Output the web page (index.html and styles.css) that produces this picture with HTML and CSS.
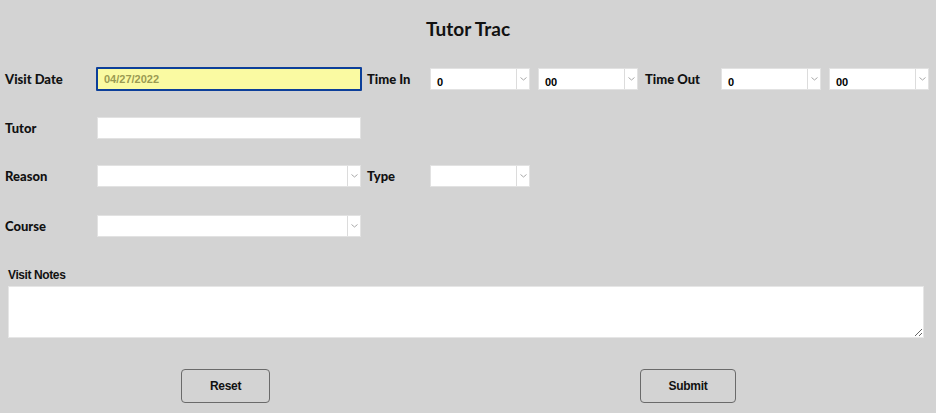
FILE: index.html
```html
<!DOCTYPE html>
<html>
<head>
<meta charset="utf-8">
<link rel="stylesheet" href="styles.css">
</head>
<body>
<h1 class="title">Tutor Trac</h1>
<div class="row row1">
  <label class="lbl lbl-main">Visit Date</label>
  <input class="date" type="text" value="04/27/2022">
  <label class="lbl lbl-time">Time In</label>
  <div class="sel"><span class="val">0</span><span class="arrow"><svg width="7" height="4" viewBox="0 0 7 4"><path d="M0.5 0.5 L3.5 3 L6.5 0.5" fill="none" stroke="#a8a8a8" stroke-width="1"/></svg></span></div>
  <div class="sel gap"><span class="val">00</span><span class="arrow"><svg width="7" height="4" viewBox="0 0 7 4"><path d="M0.5 0.5 L3.5 3 L6.5 0.5" fill="none" stroke="#a8a8a8" stroke-width="1"/></svg></span></div>
  <label class="lbl lbl-out">Time Out</label>
  <div class="sel"><span class="val">0</span><span class="arrow"><svg width="7" height="4" viewBox="0 0 7 4"><path d="M0.5 0.5 L3.5 3 L6.5 0.5" fill="none" stroke="#a8a8a8" stroke-width="1"/></svg></span></div>
  <div class="sel gap"><span class="val">00</span><span class="arrow"><svg width="7" height="4" viewBox="0 0 7 4"><path d="M0.5 0.5 L3.5 3 L6.5 0.5" fill="none" stroke="#a8a8a8" stroke-width="1"/></svg></span></div>
</div>
<div class="row row2">
  <label class="lbl lbl-main">Tutor</label>
  <input class="text" type="text">
</div>
<div class="row row3">
  <label class="lbl lbl-main">Reason</label>
  <div class="sel wide"><span class="val"></span><span class="arrow"><svg width="7" height="4" viewBox="0 0 7 4"><path d="M0.5 0.5 L3.5 3 L6.5 0.5" fill="none" stroke="#a8a8a8" stroke-width="1"/></svg></span></div>
  <label class="lbl lbl-type">Type</label>
  <div class="sel"><span class="val"></span><span class="arrow"><svg width="7" height="4" viewBox="0 0 7 4"><path d="M0.5 0.5 L3.5 3 L6.5 0.5" fill="none" stroke="#a8a8a8" stroke-width="1"/></svg></span></div>
</div>
<div class="row row4">
  <label class="lbl lbl-main">Course</label>
  <div class="sel wide"><span class="val"></span><span class="arrow"><svg width="7" height="4" viewBox="0 0 7 4"><path d="M0.5 0.5 L3.5 3 L6.5 0.5" fill="none" stroke="#a8a8a8" stroke-width="1"/></svg></span></div>
</div>
<div class="notes">
  <label class="notes-lbl">Visit Notes</label>
  <textarea class="notes-box"></textarea>
</div>
<div class="buttons">
  <button class="btn btn-reset">Reset</button>
  <button class="btn btn-submit">Submit</button>
</div>
</body>
</html>
```
FILE: styles.css
```css
html, body {
  margin: 0;
  padding: 0;
  background: #d3d3d3;
  height: 100%;
}
body {
  font-family: "Lato", "DejaVu Sans", sans-serif;
  color: #111;
}
.title {
  margin: 0;
  padding-top: 17px;
  height: 28px;
  font-size: 19px;
  font-weight: 700;
  text-align: center;
  line-height: 24px;
}
.row {
  display: flex;
  align-items: center;
  padding-left: 5px;
  height: 22px;
}
.row1 { margin-top: 23px; }
.row2 { margin-top: 27px; }
.row3 { margin-top: 26px; }
.row4 { margin-top: 28px; }
.lbl {
  font-weight: 900;
  font-size: 13px;
  color: #111;
}
.lbl-main { width: 91px; }
.lbl-time { width: 63px; margin-left: 5px; }
.lbl-type { width: 63px; margin-left: 6px; }
.lbl-out { width: 76px; margin-left: 7px; }
.date {
  box-sizing: border-box;
  width: 266px;
  height: 24px;
  margin: 0;
  border: 2px solid #0c3f9a;
  border-radius: 1px;
  background: #fafaa2;
  color: #9a9a52;
  font-family: "Liberation Sans", Arial, sans-serif;
  font-size: 11px;
  font-weight: 700;
  padding: 0 0 0 6px;
  outline: none;
}
.text {
  box-sizing: border-box;
  width: 264px;
  height: 22px;
  margin: 0 0 0 1px;
  border: 1px solid #e2e2e2;
  background: #fff;
  padding: 0;
  outline: none;
}
.sel {
  box-sizing: border-box;
  display: flex;
  width: 100px;
  height: 22px;
  background: #fff;
  border: 1px solid #e2e2e2;
}
.sel.gap { margin-left: 8px; }
.sel.wide { width: 264px; margin-left: 1px; }
.val {
  flex: 1;
  font-family: "Liberation Sans", Arial, sans-serif;
  font-size: 11px;
  font-weight: 700;
  color: #000;
  padding: 6px 0 0 6px;
  line-height: 14px;
}
.arrow {
  width: 12px;
  border-left: 1px solid #dcdcdc;
  display: flex;
  align-items: center;
  justify-content: center;
}
.notes {
  margin-top: 31px;
  padding: 0 12px 0 8px;
}
.notes-lbl {
  display: block;
  font-family: "Liberation Sans", Arial, sans-serif;
  font-size: 12px;
  font-weight: 700;
  letter-spacing: -0.4px;
  color: #111;
  height: 14px;
  line-height: 14px;
}
.notes-box {
  display: block;
  box-sizing: border-box;
  margin-top: 4px;
  width: 916px;
  height: 52px;
  border: 1px solid #e6e6e6;
  background: #fff;
  padding: 0;
  outline: none;
}
.buttons {
  display: flex;
  margin-top: 31px;
  padding-left: 181px;
}
.btn {
  box-sizing: border-box;
  height: 34px;
  border: 1px solid #6a6a6a;
  border-radius: 4px;
  background: transparent;
  font-family: "Liberation Sans", Arial, sans-serif;
  font-size: 12px;
  font-weight: 700;
  letter-spacing: -0.3px;
  color: #111;
  padding: 0;
}
.btn-reset { width: 89px; }
.btn-submit { width: 96px; margin-left: 370px; }
```
